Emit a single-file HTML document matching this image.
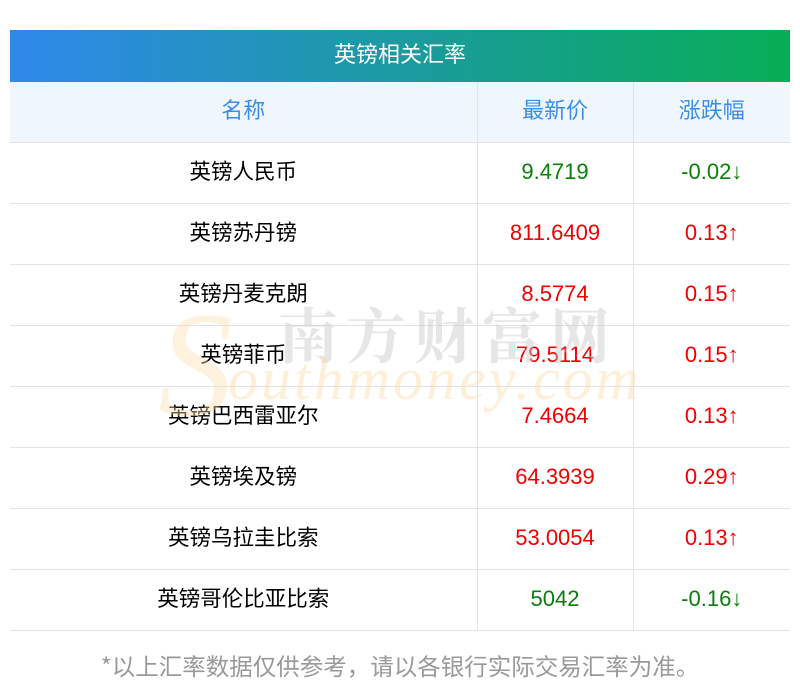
<!DOCTYPE html>
<html><head><meta charset="utf-8"><style>
body{margin:0;background:#fff;width:800px;height:697px;position:relative;font-family:"Liberation Sans","Noto Sans CJK SC",sans-serif;overflow:hidden}
.hd{position:absolute;left:10px;top:30px;width:780px;height:52px;background:linear-gradient(90deg,#2f88ec,#07ad55);color:#fff;font-size:22px;text-align:center;line-height:46px;font-family:"Noto Sans CJK SC",sans-serif}
table{position:absolute;left:10px;top:82px;width:780px;border-collapse:collapse;table-layout:fixed}
td{height:57px;padding:0 0 3px 0;border-bottom:1px solid #e1e3ea;text-align:center;font-size:22px;color:#000;line-height:24px}
td+td{border-left:1px solid #e1e3ea}
td.c{font-family:"Noto Sans CJK SC",sans-serif;font-size:21.5px;padding-bottom:4px;height:56px}
tr.th td{background:#f0f6fd;color:#3a8ee6;font-family:"Noto Sans CJK SC",sans-serif;padding-bottom:7px;height:53px}
.g{color:#0a7f0a}.r{color:#f00000}
.wm1{position:absolute;left:278px;top:290px;font-size:60px;color:rgba(200,200,200,.45);letter-spacing:8px;font-family:"Noto Serif CJK SC",serif;font-weight:bold}
.wm2{position:absolute;left:228px;top:345px;font-size:60px;color:rgba(253,220,170,.45);font-family:"Liberation Serif",serif;font-style:italic;letter-spacing:3px}
.wmS{position:absolute;left:158px;top:290px;font-size:150px;line-height:150px;color:rgba(253,220,170,.4);font-family:"Liberation Serif",serif;font-style:italic}
.ft{position:absolute;left:0;width:800px;top:648px;text-align:center;color:#999;font-size:23.5px;font-family:"Noto Sans CJK SC",sans-serif}
</style></head><body>
<div class="hd">英镑相关汇率</div>
<table>
<colgroup><col style="width:467px"><col style="width:156px"><col style="width:157px"></colgroup>
<tr class="th"><td>名称</td><td>最新价</td><td>涨跌幅</td></tr>
<tr><td class="c">英镑人民币</td><td class="g">9.4719</td><td class="g">-0.02↓</td></tr>
<tr><td class="c">英镑苏丹镑</td><td class="r">811.6409</td><td class="r">0.13↑</td></tr>
<tr><td class="c">英镑丹麦克朗</td><td class="r">8.5774</td><td class="r">0.15↑</td></tr>
<tr><td class="c">英镑菲币</td><td class="r">79.5114</td><td class="r">0.15↑</td></tr>
<tr><td class="c">英镑巴西雷亚尔</td><td class="r">7.4664</td><td class="r">0.13↑</td></tr>
<tr><td class="c">英镑埃及镑</td><td class="r">64.3939</td><td class="r">0.29↑</td></tr>
<tr><td class="c">英镑乌拉圭比索</td><td class="r">53.0054</td><td class="r">0.13↑</td></tr>
<tr><td class="c">英镑哥伦比亚比索</td><td class="g">5042</td><td class="g">-0.16↓</td></tr>
</table>
<div class="wmS">S</div>
<div class="wm1">南方财富网</div>
<div class="wm2">outhmoney.com</div>
<div class="ft">*以上汇率数据仅供参考，请以各银行实际交易汇率为准。</div>
</body></html>
